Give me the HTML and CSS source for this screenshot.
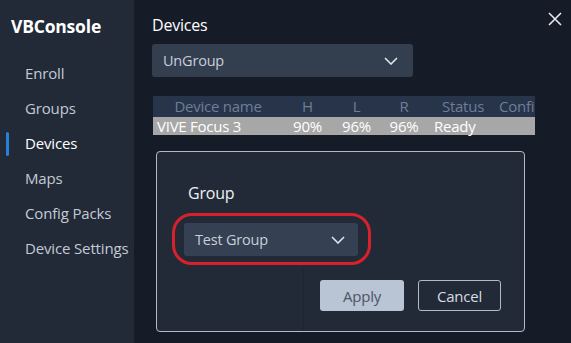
FILE: index.html
```html
<!DOCTYPE html>
<html lang="en">

<head>
    <meta charset="UTF-8">
    <meta name="viewport" content="width=device-width, initial-scale=1.0">
    <title>VBConsole</title>
    <link rel="stylesheet" href="styles.css">
</head>

<body>
    <div class="container">
        <!-- Sidebar -->
        <div class="sidebar">
            <h1 class="brand">VBConsole</h1>
            <ul class="nav">
                <li>Enroll</li>
                <li>Groups</li>
                <li class="active">Devices</li>
                <li>Maps</li>
                <li>Config Packs</li>
                <li>Device Settings</li>
            </ul>
        </div>

        <!-- Main Section -->
        <div class="main">
            <button class="close-btn" aria-label="Close">
                <svg width="14" height="14" viewBox="0 0 14 14">
                    <path d="M1 1 L13 13 M13 1 L1 13" stroke="#e6e9ee" stroke-width="1.6" fill="none" />
                </svg>
            </button>

            <h2 class="page-title">Devices</h2>

            <div class="select wide">
                <span>UnGroup</span>
                <svg class="chevron" width="14" height="8" viewBox="0 0 14 8">
                    <path d="M1 1 L7 7 L13 1" stroke="#dfe4ec" stroke-width="1.6" fill="none" />
                </svg>
            </div>

            <div class="device-table">
                <div class="row head">
                    <span class="c-name">Device name</span>
                    <span class="c-h">H</span>
                    <span class="c-l">L</span>
                    <span class="c-r">R</span>
                    <span class="c-status">Status</span>
                    <span class="c-conf">Confi</span>
                </div>
                <div class="row item">
                    <span class="c-name left">VIVE Focus 3</span>
                    <span class="c-h">90%</span>
                    <span class="c-l">96%</span>
                    <span class="c-r">96%</span>
                    <span class="c-status left">Ready</span>
                    <span class="c-conf"></span>
                </div>
            </div>

            <!-- Group dialog -->
            <div class="dialog">
                <div class="dialog-label">Group</div>
                <div class="select small highlight">
                    <span>Test Group</span>
                    <svg class="chevron" width="14" height="8" viewBox="0 0 14 8">
                        <path d="M1 1 L7 7 L13 1" stroke="#dfe4ec" stroke-width="1.6" fill="none" />
                    </svg>
                </div>
                <div class="dialog-actions">
                    <button class="btn apply">Apply</button>
                    <button class="btn cancel">Cancel</button>
                </div>
            </div>
        </div>
    </div>
</body>

</html>
```

FILE: styles.css
```css
* {
    margin: 0;
    padding: 0;
    box-sizing: border-box;
}

body {
    font-family: 'Open Sans', 'Noto Sans', sans-serif;
    background-color: #161c27;
    color: #e8ebf0;
    overflow: hidden;
}

.container {
    display: flex;
    height: 100vh;
    width: 100vw;
}

/* Sidebar */
.sidebar {
    width: 134px;
    flex-shrink: 0;
    background-color: #222a37;
    padding-top: 15px;
}

.brand {
    font-size: 17.5px;
    font-weight: 700;
    color: #ffffff;
    padding-left: 11px;
    line-height: 22px;
    letter-spacing: -0.2px;
}

.nav {
    list-style: none;
    margin-top: 19px;
}

.nav li {
    position: relative;
    height: 35px;
    line-height: 35px;
    padding-left: 25px;
    font-size: 15px;
    color: #c3cad6;
    white-space: nowrap;
    letter-spacing: -0.15px;
}

.nav li.active {
    color: #ffffff;
}

.nav li.active::before {
    content: '';
    position: absolute;
    left: 6px;
    top: 6px;
    width: 3px;
    height: 24px;
    border-radius: 2px;
    background-color: #2c7fd6;
}

/* Main */
.main {
    position: relative;
    flex: 1;
    padding: 14px 0 0 18px;
}

.close-btn {
    position: absolute;
    top: 12px;
    right: 9px;
    background: none;
    border: none;
    cursor: pointer;
}

.page-title {
    font-size: 16px;
    font-weight: 400;
    line-height: 22px;
    color: #ffffff;
    letter-spacing: -0.2px;
}

.select {
    display: flex;
    align-items: center;
    justify-content: space-between;
    background-color: #333e4f;
    border-radius: 3px;
    color: #c8cfdb;
    font-size: 14.5px;
    letter-spacing: -0.2px;
}

.select.wide {
    margin-top: 8px;
    width: 261px;
    height: 33px;
    padding: 0 15px 0 11px;
}

.select.small {
    position: relative;
    margin: 18px 0 0 27px;
    width: 174px;
    height: 33px;
    padding: 0 13px 0 11px;
    background-color: #354052;
}

/* Red highlight ring */
.select.highlight::after {
    content: '';
    position: absolute;
    left: -12px;
    right: -13px;
    top: -10px;
    bottom: -9px;
    border: 3px solid #d8222b;
    border-radius: 20px;
}

/* Table */
.device-table {
    margin-top: 19px;
    margin-left: 1px;
    width: 382px;
    font-size: 15px;
    letter-spacing: -0.25px;
}

.row {
    display: flex;
    align-items: center;
    white-space: nowrap;
}

.row.head {
    height: 21px;
    line-height: 21px;
    background-color: #28344a;
    color: #6e7e98;
}

.row.item {
    height: 18px;
    line-height: 18px;
    background-color: #a7a7a7;
    color: #ffffff;
}

.row span {
    flex-shrink: 0;
    text-align: center;
}

.c-name { width: 130px; }
.c-h { width: 49px; }
.c-l { width: 49px; }
.c-r { width: 46px; }
.c-status { width: 72px; }
.c-conf { width: 36px; overflow: hidden; text-align: left !important; }

.row span.left {
    text-align: left;
    padding-left: 4px;
}

.row span.c-status.left {
    padding-left: 7px;
}

/* Dialog */
.dialog {
    margin-top: 16px;
    margin-left: 4px;
    width: 369px;
    height: 181px;
    background-color: #222a37;
    border: 1.5px solid #b3bac6;
    border-radius: 4px;
    padding-top: 29px;
    display: flex;
    flex-direction: column;
}

.dialog-label {
    padding-left: 31px;
    font-size: 16px;
    line-height: 24px;
    color: #eef0f4;
    letter-spacing: -0.2px;
}

.dialog-actions {
    margin-top: 13px;
    margin-left: auto;
    flex: 1;
    display: flex;
    gap: 14px;
    padding: 11px 23px 0 16px;
    border-left: 1px solid #1e2531;
}

.btn {
    height: 31px;
    width: 84px;
    border-radius: 3px;
    font-family: inherit;
    font-size: 15px;
    letter-spacing: -0.2px;
    cursor: pointer;
}

.btn.apply {
    background-color: #b9c4d5;
    color: #4b5567;
    border: none;
}

.btn.cancel {
    width: 83px;
    background-color: transparent;
    color: #d6dbe3;
    border: 1.5px solid #b3bac6;
}
```
